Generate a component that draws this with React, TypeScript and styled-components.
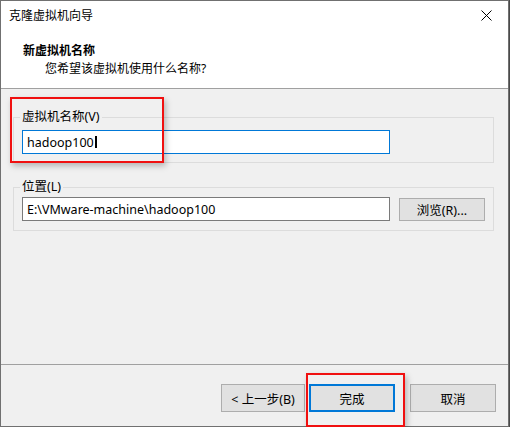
import styled, { createGlobalStyle } from "styled-components";

const GlobalStyle = createGlobalStyle`
  html, body {
    margin: 0;
    padding: 0;
    background: #4a4a4a;
  }
  * {
    box-sizing: border-box;
  }
`;

export default function App() {
  return (
    <>
      <GlobalStyle />
      <Window>
        <TitleBar>
          <Title>克隆虚拟机向导</Title>
          <CloseButton aria-label="关闭">
            <svg width="11" height="11" viewBox="0 0 11 11">
              <path d="M0.5 0.5 L10.5 10.5 M10.5 0.5 L0.5 10.5" stroke="#000" strokeWidth="1" />
            </svg>
          </CloseButton>
        </TitleBar>
        <Header>
          <HeaderTitle>新虚拟机名称</HeaderTitle>
          <HeaderSub>您希望该虚拟机使用什么名称?</HeaderSub>
        </Header>
        <Body>
          <Group $top={5} $bottom={8}>
            <Legend>虚拟机名称(V)</Legend>
            <Field $focused>
              hadoop100
              <Caret />
            </Field>
          </Group>
          <Group $top={2} $bottom={9} $gap={16}>
            <Legend>位置(L)</Legend>
            <Row>
              <Field>E:\VMware-machine\hadoop100</Field>
              <Button $w={86} $h={23}>浏览(R)...</Button>
            </Row>
          </Group>
          <Callout $x={9} $y={8} $w={154} $h={66} />
        </Body>
        <Footer>
          <Button $w={84}>&lt; 上一步(B)</Button>
          <Button $primary>完成</Button>
          <Button $gapLeft={15}>取消</Button>
          <Callout $x={305} $y={8} $w={99} $h={54} />
        </Footer>
      </Window>
    </>
  );
}

const Window = styled.div`
  display: flex;
  flex-direction: column;
  width: 509px;
  height: 427px;

  font-family: "Noto Sans", "Noto Sans CJK SC", sans-serif;
  font-size: 12px;
  color: #000;

  background: #f0f0f0;
  border: 1px solid #707070;
`;

const TitleBar = styled.div`
  display: flex;
  align-items: center;
  justify-content: space-between;
  height: 29px;
  padding: 0 9px 0 8px;

  background: #fff;
`;

const Title = styled.div`
  line-height: 16px;
`;

const CloseButton = styled.div`
  display: flex;
  align-items: center;
  justify-content: center;
  width: 24px;
  height: 24px;
  margin-right: 1px;
`;

const Header = styled.div`
  display: flex;
  flex-direction: column;
  height: 59px;
  padding: 13px 0 0 22px;

  background: #fff;
  border-bottom: 1px solid #a0a0a0;
`;

const HeaderTitle = styled.div`
  font-weight: 700;
  line-height: 16px;
`;

const HeaderSub = styled.div`
  margin-top: 2px;
  padding-left: 22px;
  line-height: 16px;
`;

const Body = styled.div`
  position: relative;
  flex: 1;
  display: flex;
  flex-direction: column;
  padding: 20px 14px 0 12px;
`;

const Group = styled.fieldset<{ $top: number; $bottom: number; $gap?: number }>`
  margin: ${(p) => p.$gap ?? 0}px 0 0;
  padding: ${(p) => p.$top}px 8px ${(p) => p.$bottom}px 6px;
  min-width: 0;

  border: 1px solid #dcdcdc;
`;

const Legend = styled.legend`
  padding: 0 2px;
  font-size: 12.5px;
  line-height: 16px;
`;

const Row = styled.div`
  display: flex;
  align-items: center;
  gap: 9px;
`;

const Field = styled.div<{ $focused?: boolean }>`
  display: flex;
  align-items: center;
  width: 368px;
  height: 24px;
  margin-left: 2px;
  padding: 0 4px;

  font-size: 12.5px;
  color: #000;

  background: #fff;
  border: 1px solid ${(p) => (p.$focused ? "#0078d7" : "#7a7a7a")};
`;

const Caret = styled.span`
  display: inline-block;
  width: 2px;
  height: 12px;
  margin-left: 1px;

  background: #000;
`;

const Footer = styled.div`
  position: relative;
  display: flex;
  justify-content: flex-end;
  gap: 4px;
  height: 62px;
  padding: 19px 12px 0 0;

  border-top: 1px solid #a0a0a0;
`;

const Button = styled.div<{ $primary?: boolean; $w?: number; $h?: number; $gapLeft?: number }>`
  display: flex;
  align-items: center;
  justify-content: center;
  flex-shrink: 0;
  width: ${(p) => p.$w ?? 86}px;
  height: ${(p) => p.$h ?? 28}px;
  margin-left: ${(p) => (p.$gapLeft ? p.$gapLeft - 4 : 0)}px;

  font-size: 12.5px;

  background: #e1e1e1;
  border: ${(p) => (p.$primary ? "2px solid #0078d7" : "1px solid #adadad")};
`;

// red highlight frame drawn over the dialog, placed inside its section
const Callout = styled.div<{ $x: number; $y: number; $w: number; $h: number }>`
  position: absolute;
  left: ${(p) => p.$x}px;
  top: ${(p) => p.$y}px;
  width: ${(p) => p.$w}px;
  height: ${(p) => p.$h}px;

  border: 2px solid #f01010;
  box-shadow: 2px 3px 6px rgba(0, 0, 0, 0.25);
  pointer-events: none;
`;
